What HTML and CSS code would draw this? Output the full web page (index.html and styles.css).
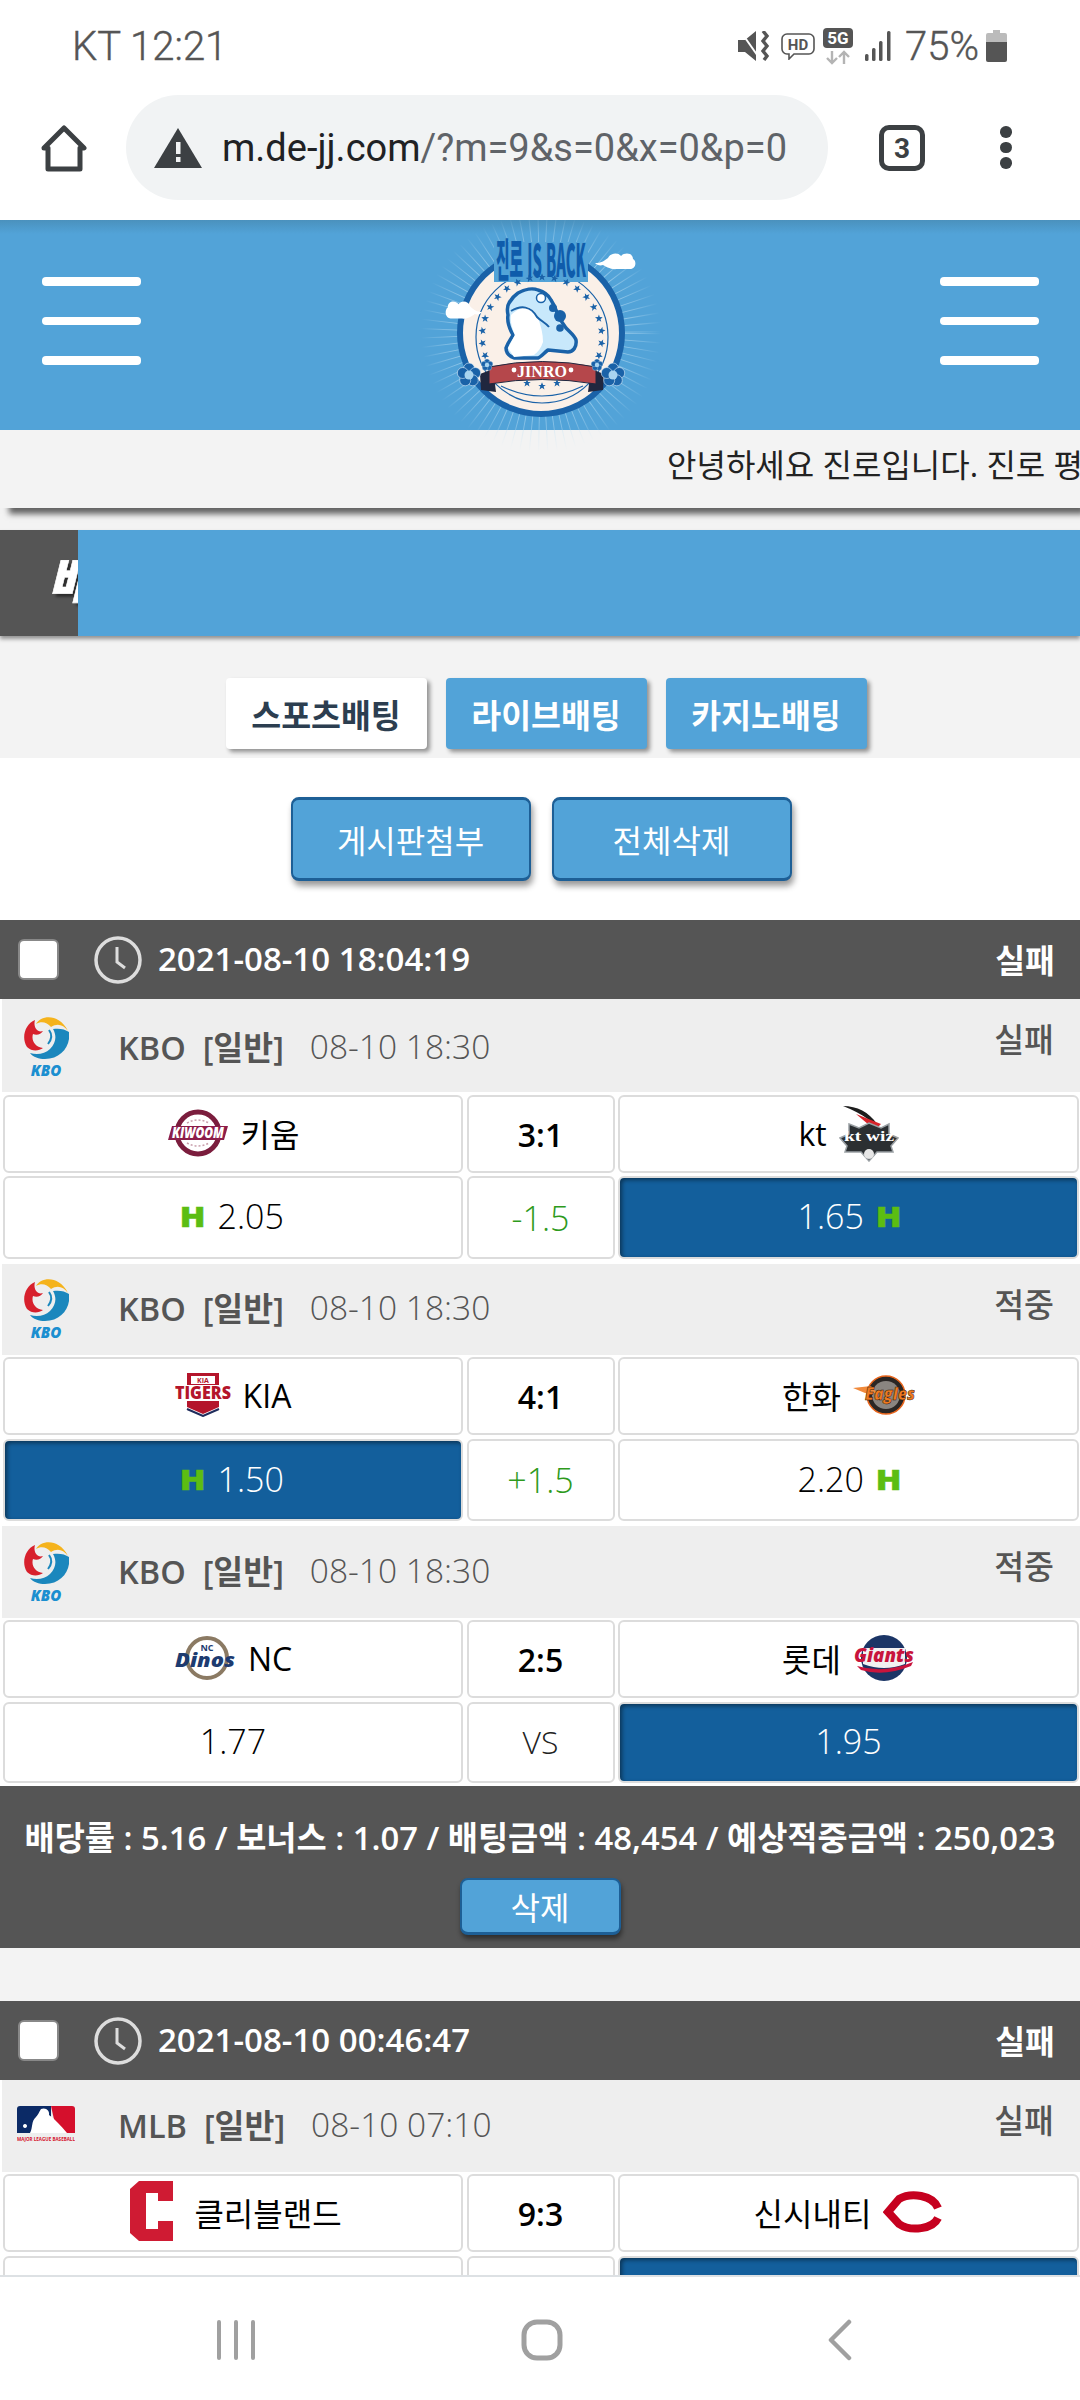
FILE: index.html
```html
<!DOCTYPE html>
<html lang="ko">
<head>
<meta charset="utf-8">
<title>진로</title>
<link rel="stylesheet" href="styles.css">
</head>
<body>
<svg class="defs" width="0" height="0" aria-hidden="true">
  <symbol id="kbo" viewBox="0 0 46 63">
    <path fill="#f5b31c" d="M13 10C18 1 36-1 45 17 40 10 34 9 28 13 24 8 18 7 13 10Z"/>
    <path fill="#d7202c" d="M12 6C2 10-2 24 4 33 9 38 16 37 20 34 12 33 8 26 10 20 14 22 18 20 20 17 14 19 10 13 12 6Z"/>
    <path fill="#1b87bd" d="M46 18C48 32 38 45 22 45 16 45 10 43 7 39 14 41 22 40 27 35 33 29 34 22 30 15 36 14 42 15 46 18Z"/>
    <path fill="none" stroke="#1b87bd" stroke-width="2" d="M26 16C29 20 29 25 25 30"/>
    <text class="kbo-t" x="23" y="62" text-anchor="middle">KBO</text>
  </symbol>
</svg>

<div class="status">
  <span class="status-t">KT 12:21</span>
  <div class="status-r">
    <svg class="i-mute" viewBox="0 0 32 30"><path fill="#555" d="M0 9h7L18 0v30L7 21H0Z"/><path fill="none" stroke="#555" stroke-width="3.4" d="M25 0l4 5-4 5 4 5-4 5 4 5-3 4"/><path stroke="#fff" stroke-width="2" d="M3 1 22 28"/></svg>
    <svg class="i-hd" viewBox="0 0 34 27"><path fill="none" stroke="#555" stroke-width="1.6" d="M6 1h22a5 5 0 0 1 5 5v10a5 5 0 0 1-5 5H13l-5 5v-5H6a5 5 0 0 1-5-5V6a5 5 0 0 1 5-5Z"/><text class="hd-t" x="17" y="17" text-anchor="middle">HD</text></svg>
    <svg class="i-5g" viewBox="0 0 30 37"><rect width="30" height="20" rx="4" fill="#555"/><text class="g-t" x="15" y="16" text-anchor="middle">5G</text><path fill="none" stroke="#b4b4b4" stroke-width="2.4" d="M9 23v12M4 30l5 5 5-5M21 36V24M16 29l5-5 5 5"/></svg>
    <svg class="i-sig" viewBox="0 0 26 30"><rect y="23" width="3.5" height="7" rx="1.5" fill="#555"/><rect x="7" y="17" width="3.5" height="13" rx="1.5" fill="#555"/><rect x="14" y="10" width="3.5" height="20" rx="1.5" fill="#555"/><rect x="22" width="3.5" height="30" rx="1.5" fill="#555"/></svg>
    <span class="status-p">75%</span>
    <svg class="i-bat" viewBox="0 0 21 32"><path fill="#bbb" d="M7 0h7v3h5a2 2 0 0 1 2 2v7H0V5a2 2 0 0 1 2-2h5Z"/><path fill="#555" d="M0 12h21v18a2 2 0 0 1-2 2H2a2 2 0 0 1-2-2Z"/></svg>
  </div>
</div>

<div class="toolbar">
  <svg class="i-home" viewBox="0 0 48 48"><path fill="none" stroke="#3c4043" stroke-width="5" stroke-linejoin="round" d="M8 23H4L24 3l20 20h-4v21H8Z"/></svg>
  <div class="url">
    <svg class="i-warn" viewBox="0 0 48 40"><path fill="#3c4043" d="M24 0 48 40H0Z"/><rect x="22" y="14" width="4.5" height="12" fill="#f1f3f4"/><rect x="22" y="29" width="4.5" height="5" fill="#f1f3f4"/></svg>
    <span class="url-t"><span class="url-h">m.de-jj.com</span>/?m=9&amp;s=0&amp;x=0&amp;p=0</span>
  </div>
  <div class="tabcount">3</div>
  <div class="dots"><i></i><i></i><i></i></div>
</div>

<main class="page">
  <header class="hero">
    <div class="burger"><i></i><i></i><i></i></div>
    <svg class="logo" viewBox="0 0 220 210">
      <defs>
        <radialGradient id="rayfade" gradientUnits="userSpaceOnUse" cx="110" cy="113" r="120">
          <stop offset=".7" stop-color="#bfe0f4" stop-opacity=".6"/>
          <stop offset="1" stop-color="#bfe0f4" stop-opacity="0"/>
        </radialGradient>
        <path id="star" d="M0-3.8 1.1-1.1h2.7L1.6.6l.9 2.9L0 1.8-2.5 3.5l.9-2.9L-3.8-1.1H-1.1Z" fill="#1a62a8"/>
        <g id="flower"><g fill="#1a62a8" stroke="#dff0fb" stroke-width=".6"><circle cy="-6.5" r="5.5"/><circle cx="6.2" cy="-2" r="5.5"/><circle cx="3.8" cy="5.3" r="5.5"/><circle cx="-3.8" cy="5.3" r="5.5"/><circle cx="-6.2" cy="-2" r="5.5"/></g><circle r="4.5" fill="#a9d4ef"/></g>
        <path id="cloud" fill="#fff" d="M0 9C6 9 9 7 13 4 15-1 23-2 26 2 30-2 38-1 38 5 42 7 41 15 35 15H22C16 16 10 12 8 11 5 12 2 11 0 9Z"/>
      </defs>
      <circle cx="110" cy="113" r="101" fill="none" stroke="url(#rayfade)" stroke-width="38" stroke-dasharray="1 7"/>
      <circle cx="110" cy="113" r="81" fill="#faf0e8" stroke="#1a62a8" stroke-width="6"/>
      <circle cx="111" cy="117" r="66" fill="none" stroke="#1a62a8" stroke-width="1.2"/>
      <rect x="63" y="22" width="94" height="40" fill="#52a3d8"/>
      <g transform="translate(111 117)">
        <use href="#star" transform="rotate(-120) translate(0 -60)"/><use href="#star" transform="rotate(-108) translate(0 -60)"/><use href="#star" transform="rotate(-96) translate(0 -60)"/><use href="#star" transform="rotate(-84) translate(0 -60)"/><use href="#star" transform="rotate(-72) translate(0 -60)"/><use href="#star" transform="rotate(-60) translate(0 -60)"/><use href="#star" transform="rotate(-48) translate(0 -60)"/><use href="#star" transform="rotate(-36) translate(0 -60)"/><use href="#star" transform="rotate(-24) translate(0 -60)"/><use href="#star" transform="rotate(-12) translate(0 -60)"/><use href="#star" transform="translate(0 -60)"/><use href="#star" transform="rotate(12) translate(0 -60)"/><use href="#star" transform="rotate(24) translate(0 -60)"/><use href="#star" transform="rotate(36) translate(0 -60)"/><use href="#star" transform="rotate(48) translate(0 -60)"/><use href="#star" transform="rotate(60) translate(0 -60)"/><use href="#star" transform="rotate(72) translate(0 -60)"/><use href="#star" transform="rotate(84) translate(0 -60)"/><use href="#star" transform="rotate(96) translate(0 -60)"/><use href="#star" transform="rotate(108) translate(0 -60)"/><use href="#star" transform="rotate(120) translate(0 -60)"/>
      </g>
      <text class="logo-title" x="110" y="57" text-anchor="middle" textLength="90" lengthAdjust="spacingAndGlyphs">진로 IS BACK</text>
      <path fill="#c8e8fb" stroke="#1a62a8" stroke-width="3.5" stroke-linejoin="round" d="M87 73C94 69 102 68 107 70 114 72 118 76 120 80 124 86 125 90 127 95 130 101 132 104 135 108 140 113 144 116 145 120 146 127 142 132 137 132L117 130C113 133 110 137 107 138L83 138C78 136 75 132 75 128 77 122 80 119 82 115 78 108 76 101 77 95 76 90 76 86 78 83 81 78 84 75 87 73Z"/>
      <path fill="#fff" d="M80 95C85 90 91 87 97 87 103 90 106 94 107 98 110 106 112 114 112 122 110 128 107 132 103 135L83 137 77 128 84 115C81 108 79 101 80 95Z"/>
      <path fill="none" stroke="#1a62a8" stroke-width="2" d="M80 91C90 85 100 86 106 97 110 101 115 103 118 107"/>
      <circle cx="110" cy="78" r="4.5" fill="#fff" stroke="#1a62a8" stroke-width="1.5"/>
      <circle cx="122" cy="88" r="4" fill="#1a62a8"/><circle cx="129" cy="96" r="6" fill="#1a62a8"/><circle cx="129" cy="108" r="3.8" fill="#1a62a8"/>
      <path fill="#20273f" d="M49 154 62 149 65 172 50 170Z M173 154 160 149 157 172 172 170Z"/>
      <path fill="#b5474b" stroke="#20273f" stroke-width="1" d="M58 147Q111 136 165 147L165 164Q111 155 58 164Z"/>
      <text class="logo-jinro" x="111" y="157" text-anchor="middle">JINRO</text>
      <circle cx="83" cy="150" r="2.4" fill="#fff"/><circle cx="140" cy="150" r="2.4" fill="#fff"/>
      <path fill="none" stroke="#1a62a8" stroke-width="1.2" d="M70 166Q111 186 152 166"/>
      <use href="#star" x="111" y="166"/><use href="#star" x="96" y="163"/><use href="#star" x="126" y="163"/>
      <use href="#flower" x="38" y="155"/><use href="#flower" x="182" y="155"/>
      <use href="#flower" transform="translate(56 145) scale(.5)"/><use href="#flower" transform="translate(166 145) scale(.5)"/>
      <use href="#cloud" x="164" y="34"/><use href="#cloud" transform="translate(51 82) scale(-.9 1.1)"/>
    </svg>
    <div class="burger"><i></i><i></i><i></i></div>
  </header>

  <div class="top-panel">
    <div class="notice"><p class="notice-t">안녕하세요 진로입니다. 진로 평생주소 안내</p></div>
    <div class="title-bar"><div class="title-side"><em class="title-t">배팅내역</em></div></div>
    <nav class="tabs">
      <a class="tab tab-on">스포츠배팅</a>
      <a class="tab">라이브배팅</a>
      <a class="tab">카지노배팅</a>
    </nav>
  </div>

  <div class="actions">
    <a class="btn">게시판첨부</a>
    <a class="btn">전체삭제</a>
  </div>

  <section class="bet">
    <div class="bet-head">
      <span class="check"></span>
      <svg class="clock" viewBox="0 0 48 48"><circle cx="24" cy="24" r="22" fill="none" stroke="#ddd" stroke-width="3.5"/><path fill="none" stroke="#ddd" stroke-width="3" d="M23 11v15l8 6"/></svg>
      <span class="bet-date">2021-08-10 18:04:19</span>
      <span class="bet-res">실패</span>
    </div>

    <article class="game g1">
      <div class="league">
        <svg class="lg-kbo"><use href="#kbo"/></svg>
        <div class="league-n">KBO&nbsp;&nbsp;[일반]</div>
        <div class="league-d">08-10 18:30</div>
        <div class="league-s">실패</div>
      </div>
      <div class="rows">
        <div class="cell team">
          <svg class="lg" width="62" height="48" viewBox="0 0 62 48"><circle cx="31" cy="24" r="21" fill="#fff" stroke="#7b1d3d" stroke-width="5"/><path fill="none" stroke="#c9a0ad" stroke-width="1.5" stroke-dasharray="2 2" d="M20 14Q31 8 42 14M20 34Q31 40 42 34"/><path fill="#8c1d4a" d="M5 17H61L57 31H1Z"/><text class="lg-kw" x="31" y="29" text-anchor="middle" textLength="52" lengthAdjust="spacingAndGlyphs">KIWOOM</text></svg>
          <span>키움</span>
        </div>
        <div class="cell score">3:1</div>
        <div class="cell team">
          <span>kt</span>
          <svg class="lg" width="60" height="58" viewBox="0 0 60 58"><path fill="#1d1d1d" d="M4 2C18 2 30 8 38 20L30 16C22 10 14 6 4 2Z"/><path fill="#d8232a" d="M17 10 42 20 36 26Z"/><path fill="#2b2f32" stroke="#9aa0a4" stroke-width="1.5" d="M10 20 20 24 30 19 42 24 50 20 50 30 59 34 52 42 54 48 38 48 30 57 22 48 6 48 8 42 1 34 10 30Z"/><text class="lg-kt" x="30" y="37" text-anchor="middle" textLength="50" lengthAdjust="spacingAndGlyphs">kt wiz</text><circle cx="30" cy="50" r="5" fill="#e6e6e6"/></svg>
        </div>
        <div class="cell odds"><b class="h">H</b><span>2.05</span></div>
        <div class="cell line">-1.5</div>
        <div class="cell odds on"><span>1.65</span><b class="h">H</b></div>
      </div>
    </article>

    <article class="game g2">
      <div class="league">
        <svg class="lg-kbo"><use href="#kbo"/></svg>
        <div class="league-n">KBO&nbsp;&nbsp;[일반]</div>
        <div class="league-d">08-10 18:30</div>
        <div class="league-s">적중</div>
      </div>
      <div class="rows">
        <div class="cell team">
          <svg class="lg" width="56" height="44" viewBox="0 0 56 44"><path fill="#b4152b" d="M12 0H44V12H12Z"/><rect x="16" y="3" width="24" height="8" fill="#fff"/><text class="lg-ki" x="28" y="10" text-anchor="middle">KIA</text><path fill="#b4152b" d="M12 28H44V34L28 41 12 34Z"/><path fill="none" stroke="#1f2c5c" stroke-width="2" d="M12 36 28 43 44 36"/><text class="lg-ti" x="28" y="26" text-anchor="middle" textLength="56" lengthAdjust="spacingAndGlyphs">TIGERS</text></svg>
          <span>KIA</span>
        </div>
        <div class="cell score">4:1</div>
        <div class="cell team">
          <span>한화</span>
          <svg class="lg" width="62" height="40" viewBox="0 0 62 40"><circle cx="33" cy="20" r="19" fill="#2a2624" stroke="#e8641b" stroke-width="1.5"/><circle cx="33" cy="20" r="14" fill="#8a8580"/><path fill="#f08a3c" d="M0 13 18 11 24 18H12Z"/><text class="lg-ea" x="37" y="25" text-anchor="middle" textLength="50" lengthAdjust="spacingAndGlyphs">Eagles</text></svg>
        </div>
        <div class="cell odds on"><b class="h">H</b><span>1.50</span></div>
        <div class="cell line">+1.5</div>
        <div class="cell odds"><span>2.20</span><b class="h">H</b></div>
      </div>
    </article>

    <article class="game g3">
      <div class="league">
        <svg class="lg-kbo"><use href="#kbo"/></svg>
        <div class="league-n">KBO&nbsp;&nbsp;[일반]</div>
        <div class="league-d">08-10 18:30</div>
        <div class="league-s">적중</div>
      </div>
      <div class="rows">
        <div class="cell team">
          <svg class="lg" width="62" height="44" viewBox="0 0 62 44"><circle cx="33" cy="22" r="20" fill="#fff" stroke="#8b7a63" stroke-width="4"/><text class="lg-nc" x="33" y="15" text-anchor="middle">NC</text><text class="lg-di" x="31" y="31" text-anchor="middle" textLength="60" lengthAdjust="spacingAndGlyphs">Dinos</text></svg>
          <span>NC</span>
        </div>
        <div class="cell score">2:5</div>
        <div class="cell team">
          <span>롯데</span>
          <svg class="lg" width="62" height="48" viewBox="0 0 62 48"><circle cx="31" cy="24" r="23" fill="#1b3566"/><path fill="#f2f2f2" d="M10 14H52V30Q31 38 10 30Z"/><path fill="#c8143c" d="M4 32Q31 40 60 28L58 32Q31 43 8 36Z"/><text class="lg-gi" x="31" y="28" text-anchor="middle" textLength="60" lengthAdjust="spacingAndGlyphs">Giants</text></svg>
        </div>
        <div class="cell odds"><span>1.77</span></div>
        <div class="cell line line-vs">VS</div>
        <div class="cell odds on"><span>1.95</span></div>
      </div>
    </article>

    <div class="bet-foot">
      <p class="sum">배당률 : 5.16 / 보너스 : 1.07 / 배팅금액 : 48,454 / 예상적중금액 : 250,023</p>
      <a class="del">삭제</a>
    </div>
  </section>

  <div class="spacer"></div>

  <section class="bet">
    <div class="bet-head">
      <span class="check"></span>
      <svg class="clock" viewBox="0 0 48 48"><circle cx="24" cy="24" r="22" fill="none" stroke="#ddd" stroke-width="3.5"/><path fill="none" stroke="#ddd" stroke-width="3" d="M23 11v15l8 6"/></svg>
      <span class="bet-date">2021-08-10 00:46:47</span>
      <span class="bet-res">실패</span>
    </div>
    <article class="game g3">
      <div class="league">
        <svg class="lg-mlb" viewBox="0 0 58 36"><path fill="#0b2a66" d="M3 0H34V27H0V3A3 3 0 0 1 3 0Z"/><path fill="#d50f2c" d="M34 0H55A3 3 0 0 1 58 3V27H40Z"/><path fill="#fff" d="M24 3C29 1 33 5 32 9 38 13 44 20 50 27H13C16 22 14 15 19 11 21 9 22 6 24 3ZM8 18a2 2 0 1 0 .01 0Z"/><text class="lg-ml" x="29" y="35" text-anchor="middle" textLength="58" lengthAdjust="spacingAndGlyphs">MAJOR LEAGUE BASEBALL</text></svg>
        <div class="league-n">MLB&nbsp;&nbsp;[일반]</div>
        <div class="league-d">08-10 07:10</div>
        <div class="league-s">실패</div>
      </div>
      <div class="rows">
        <div class="cell team team-wide">
          <svg class="lg" width="43" height="62" viewBox="0 0 43 62"><path fill="#cf1b33" d="M9 0H43V20H28V12H16V48H28V40H43V60H9L0 52V8Z"/></svg>
          <span>클리블랜드</span>
        </div>
        <div class="cell score">9:3</div>
        <div class="cell team">
          <span>신시내티</span>
          <svg class="lg" width="60" height="42" viewBox="0 0 60 42"><path fill="none" stroke="#c6011f" stroke-width="8" stroke-linejoin="miter" d="M55 17C50 4 28 1 16 8L5 21 16 33C28 41 50 38 55 27"/></svg>
        </div>
        <div class="cell odds"></div>
        <div class="cell line"></div>
        <div class="cell odds on"></div>
      </div>
    </article>
  </section>
</main>

<footer class="navbar">
  <svg class="n-menu" viewBox="0 0 38 40"><path stroke="#a0a0a0" stroke-width="4" stroke-linecap="round" d="M2 2v36M19 2v36M36 2v36"/></svg>
  <svg class="n-home" viewBox="0 0 42 42"><rect x="3" y="3" width="36" height="36" rx="13" fill="none" stroke="#a0a0a0" stroke-width="5"/></svg>
  <svg class="n-back" viewBox="0 0 24 42"><path fill="none" stroke="#a0a0a0" stroke-width="4.5" stroke-linecap="round" stroke-linejoin="round" d="M21 3 3 21l18 18"/></svg>
</footer>
</body>
</html>
```
FILE: styles.css
```css
* { box-sizing: border-box; }
html, body { margin: 0; padding: 0; }
body {
  width: 1080px;
  height: 2400px;
  overflow: hidden;
  background: #fff;
  font-family: "Open Sans", "Noto Sans CJK KR", sans-serif;
  display: flex;
  flex-direction: column;
}
.defs { position: absolute; }
a { display: flex; align-items: center; justify-content: center; }

.status { flex: none; height: 95px; padding: 0 73px 3px 72px; display: flex; align-items: center; justify-content: space-between; font-family: Roboto, sans-serif; color: #555; font-size: 40px; }
.status-t, .status-p { font-weight: 300; -webkit-text-stroke: .4px #555; }
.status-r { display: flex; align-items: center; }
.i-mute { width: 32px; height: 30px; }
.i-hd { width: 34px; height: 27px; margin-left: 11px; }
.i-5g { width: 30px; height: 37px; margin-left: 8px; }
.i-sig { width: 26px; height: 30px; margin-left: 12px; }
.status-p { margin-left: 14px; }
.i-bat { width: 21px; height: 32px; margin-left: 7px; }
.hd-t { font: 700 15px Roboto, sans-serif; fill: #555; }
.g-t { font: 700 17px Roboto, sans-serif; fill: #fff; }

.toolbar { flex: none; height: 125px; display: flex; align-items: flex-start; font-family: Roboto, sans-serif; }
.i-home { width: 48px; height: 48px; margin: 30px 0 0 40px; }
.url { width: 702px; height: 105px; margin-left: 38px; border-radius: 53px; background: #f1f3f4; display: flex; align-items: center; padding-left: 28px; }
.i-warn { width: 48px; height: 40px; flex: none; }
.url-t { margin-left: 20px; font-size: 38px; color: #5f6368; white-space: nowrap; }
.url-h { color: #202124; }
.tabcount { width: 46px; height: 46px; margin: 30px 0 0 51px; border: 5px solid #3c4043; border-radius: 10px; display: flex; align-items: center; justify-content: center; font-size: 28px; font-weight: 700; color: #3c4043; }
.dots { margin: 31px 0 0 75px; display: flex; flex-direction: column; gap: 4px; }
.dots i { width: 11.5px; height: 11.5px; border-radius: 50%; background: #3c4043; }

.page { flex: none; height: 2055px; overflow: hidden; background: #fff; }

.hero { height: 210px; background: linear-gradient(#4a91bd, #52a3d8 14px); display: flex; align-items: center; justify-content: space-between; padding: 0 41px 0 42px; }
.burger { width: 99px; padding-bottom: 8px; display: flex; flex-direction: column; gap: 31px; }
.burger i { height: 8.5px; border-radius: 4px; background: #fff; }
.logo { width: 220px; height: 210px; overflow: visible; }
.logo-title { font: 900 45px "Noto Sans CJK KR", sans-serif; fill: #0f5cab; }
.logo-jinro { font: 700 16px "Liberation Serif", serif; fill: #fff; }

.top-panel { background: #f3f3f3; padding-bottom: 9px; }
.notice { height: 78px; background: #f3f3f3; box-shadow: 7px 8px 6px -2px rgba(0, 0, 0, .6); }
.notice-t { margin: 0; height: 78px; padding-left: 667px; overflow: hidden; white-space: nowrap; line-height: 70px; font-size: 32px; color: #222; }
.title-bar { margin-top: 22px; height: 106px; background: #52a3d8; box-shadow: 0 3px 4px rgba(0, 0, 0, .4); }
.title-side { width: 78px; height: 106px; background: #555; padding-left: 48px; overflow: hidden; white-space: nowrap; }
.title-t { font-size: 52px; font-weight: 800; line-height: 100px; color: #fff; -webkit-text-stroke: .6px #fff; text-shadow: 3px 3px 3px rgba(0, 0, 0, .5); }
.tabs { margin-top: 42px; padding-left: 12px; display: flex; justify-content: center; gap: 19px; }
.tab { width: 201px; height: 71px; border-radius: 4px; background: #52a3d8; color: #fff; font-size: 32.5px; font-weight: 700; box-shadow: 3px 3px 4px rgba(0, 0, 0, .4); }
.tab-on { background: #fff; color: #2c3e50; }

.actions { padding: 39px 0 39px 2px; display: flex; justify-content: center; gap: 21px; }
.btn { width: 240px; height: 84px; border: 2px solid #1d5f96; border-top-width: 3px; border-bottom-width: 3px; border-radius: 8px; background: #52a3d8; color: #fff; font-size: 32px; box-shadow: 2px 5px 6px rgba(0, 0, 0, .4); }

.bet-head { height: 79px; background: #555; display: flex; align-items: center; padding: 0 25px 0 18px; color: #fff; }
.check { width: 41px; height: 41px; background: #fff; border: 2px solid #888; border-radius: 6px; flex: none; }
.clock { width: 48px; height: 48px; margin-left: 35px; flex: none; }
.bet-date { margin-left: 16px; padding-bottom: 2px; font-size: 33px; font-weight: 600; }
.bet-res { margin-left: auto; padding-bottom: 2px; font-size: 32.5px; font-weight: 600; }

.league { margin-left: 2px; background: #eee; display: flex; align-items: center; color: #555; position: relative; }
.lg-kbo { width: 46px; height: 63px; margin: 0 49px 0 21px; flex: none; }
.lg-mlb { width: 58px; height: 36px; margin: 0 43px 0 15px; flex: none; }
.kbo-t { font: italic 800 15px "Open Sans", sans-serif; fill: #1b8fd0; }
.league-n { font-size: 32.5px; font-weight: 600; }
.league-d { margin-left: 26px; font-size: 33.5px; font-weight: 300; }
.league-s { margin-left: auto; margin-right: 26px; align-self: flex-start; margin-top: 20px; font-size: 32.5px; font-weight: 500; line-height: 42px; }

.rows { display: grid; grid-template-columns: 460px 148px 461px; grid-template-rows: 78px auto; column-gap: 3.5px; padding: 0 1px 0 3px; }
.cell { background: #fff; border: 2.5px solid #dcdcdc; border-radius: 6px; display: flex; align-items: center; justify-content: center; color: #000; font-size: 32px; }
.team { gap: 12px; font-weight: 400; padding-bottom: 2px; }
.team-wide { gap: 21px; padding-left: 6px; }
.score { font-weight: 600; }
.lg { flex: none; }
.odds { gap: 14px; font-weight: 300; font-size: 34px; padding-bottom: 3px; }
.odds.on { background: #135f9c; color: #fff; box-shadow: inset 2px 2px 4px rgba(0, 0, 0, .45); }
.h { display: inline-block; font-size: 28px; font-weight: 800; color: #5cbd12; line-height: 1; transform: scaleX(1.2); -webkit-text-stroke: .5px #5cbd12; }
.line { color: #2e9a1c; font-weight: 300; font-size: 34px; }
.line-vs { color: #222; font-size: 32px; padding-bottom: 3px; }

.g1 .league { height: 93px; margin-bottom: 3px; }
.g1 .rows { grid-template-rows: 78px 83px; row-gap: 3px; margin-bottom: 5px; }
.g2 .league { height: 91px; margin-bottom: 2px; padding-bottom: 5px; }
.g2 .rows { grid-template-rows: 78px 82px; row-gap: 4px; margin-bottom: 5px; }
.g3 .league { height: 92px; margin-bottom: 2px; padding-bottom: 4px; }
.g3 .rows { grid-template-rows: 78px 81px; row-gap: 4px; margin-bottom: 3px; }

.bet-foot { height: 162px; background: #555; padding-top: 30px; display: flex; flex-direction: column; align-items: center; }
.sum { margin: 0; height: 44px; line-height: 44px; font-size: 32.8px; font-weight: 600; color: #fff; white-space: nowrap; }
.del { margin-top: 18px; width: 161px; height: 57px; border: 2px solid #1d5f96; border-bottom-width: 3px; border-radius: 8px; background: #52a3d8; color: #fff; font-size: 32px; box-shadow: 1px 4px 5px rgba(0, 0, 0, .45); }
.spacer { height: 53px; background: #f3f3f3; }

.lg-kw { font: italic 800 15px "Open Sans", sans-serif; fill: #fff; }
.lg-kt { font: 700 15px "Liberation Serif", serif; fill: #fff; }
.lg-ki { font: 700 7px "Open Sans", sans-serif; fill: #b4152b; }
.lg-ti { font: 800 17px "Open Sans", sans-serif; fill: #b4152b; }
.lg-ea { font: italic 800 17px "Open Sans", sans-serif; fill: #f07a20; stroke: #2a1408; stroke-width: .5; }
.lg-nc { font: 700 9px "Open Sans", sans-serif; fill: #1d3b70; }
.lg-di { font: italic 800 20px "Open Sans", sans-serif; fill: #1d3b70; }
.lg-gi { font: italic 800 19px "Open Sans", sans-serif; fill: #c8143c; }
.lg-ml { font: 700 5px "Open Sans", sans-serif; fill: #d50f2c; }

.navbar { flex: 1; border-top: 2px solid #dde1e4; display: flex; align-items: center; justify-content: space-between; padding: 3px 228px 0 217px; background: #fff; }
.n-menu { width: 38px; height: 40px; }
.n-home { width: 42px; height: 42px; }
.n-back { width: 24px; height: 42px; }
```
